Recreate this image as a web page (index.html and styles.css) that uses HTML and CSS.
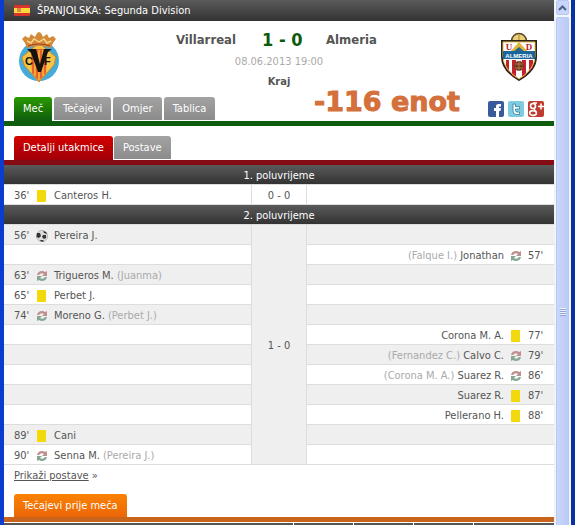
FILE: index.html
```html
<!DOCTYPE html>
<html lang="hr">
<head>
    <meta charset="UTF-8">
    <meta name="viewport" content="width=device-width, initial-scale=1.0">
    <title>Villarreal - Almeria</title>
    <link rel="stylesheet" href="styles.css">
</head>
<body>
    <!-- shared icons -->
    <svg class="sprite" aria-hidden="true">
        <symbol id="card" viewBox="0 0 12 12">
            <rect x="1" y="0" width="9" height="12" rx="1" fill="#f2d90c"/>
        </symbol>
        <symbol id="sub" viewBox="0 0 12 12">
            <path d="M1 5 Q2 1 6 1 Q8 1 9 2 L11 1 V6 H6 L8 4 Q5 2 3 5 Z" fill="#bf8f8f"/>
            <path d="M11 7 Q10 11 6 11 Q4 11 3 10 L1 11 V6 H6 L4 8 Q7 10 9 7 Z" fill="#86a892"/>
        </symbol>
        <symbol id="ball" viewBox="0 0 12 12">
            <circle cx="6" cy="6" r="5.6" fill="#ddd" stroke="#999" stroke-width=".6"/>
            <path d="M1 3 L4 3 L5 6 L3 8 L.5 7 Z M7 1 L10 2 L11 4 L8 3 Z M7 5 L10 5 L10 8 L8 9 L6 7 Z M4 10 L7 10 L8 11.5 L5 11.5 Z" fill="#333"/>
        </symbol>
    </svg>

    <main class="page">
        <header class="league">
            <svg class="flag" viewBox="0 0 16 11">
                <rect width="16" height="11" rx="1" fill="#d8342b"/>
                <rect y="3" width="16" height="5" fill="#ffd83a"/>
                <rect x="3" y="3" width="4" height="4" fill="#d98a4a"/>
            </svg>
            <span>ŠPANJOLSKA: Segunda Division</span>
        </header>

        <section class="match">
            <svg class="crest" viewBox="0 0 42 50" role="img" aria-label="Villarreal">
                <circle cx="21" cy="29" r="20" fill="#45acd9"/>
                <path d="M21 11 L38 25 L36 33 L21 50 L6 33 L4 25 Z" fill="#f6c444" stroke="#c58a32"/>
                <path d="M13 17 H29 L28 41 L21 49 L14 41 Z" fill="#e8602c"/>
                <path d="M17 18 V44 M21 18 V48 M25 18 V44" stroke="#f5b83c" stroke-width="1.6"/>
                <path d="M9 17 H18 L22 32 L26 17 H34 L30 20 L23 40 H20 L13 21 Z" fill="#17120e"/>
                <text x="7" y="33" class="crest-letter">C</text>
                <text x="26" y="33" class="crest-letter">F</text>
                <path d="M9 16 L7 11 L4 7 L7 4 L11 6 L13 2 L17 5 L19 1 L21 0 L23 1 L25 5 L29 2 L31 6 L35 4 L38 7 L35 11 L33 16 Q21 12 9 16 Z" fill="#d38b3a"/>
                <path d="M9 9 L13 11 L16 7 L21 10 L26 7 L29 11 L33 9" fill="none" stroke="#f8d68a" stroke-width="1.4"/>
                <path d="M10 14 Q21 10 32 14" fill="none" stroke="#a83e25" stroke-width="1.2"/>
            </svg>

            <div class="summary">
                <div class="teams">
                    <h2 class="home">Villarreal</h2>
                    <strong class="score">1 - 0</strong>
                    <h2>Almeria</h2>
                </div>
                <div class="date">08.06.2013 19:00</div>
                <div class="status">Kraj</div>
            </div>

            <svg class="crest" viewBox="0 0 42 50" role="img" aria-label="Almeria">
                <circle cx="21" cy="9" r="7.5" fill="#e8cf78" stroke="#5b4524" stroke-width="1.5"/>
                <path d="M21 3 V14 M15 9 H27" stroke="#a98a3c"/>
                <path d="M4 9 H38 V25 Q38 38 21 48 Q4 38 4 25 Z" fill="#fff" stroke="#2c2418" stroke-width="2"/>
                <path d="M8 28 V36 L11 40 V28 Z M14 28 V43 L18 46 V28 Z M24 28 V46 L28 43 V28 Z M31 28 V40 L35 35 V28 Z" fill="#c4202c"/>
                <path d="M5 10 H37 V24 Q37 37 21 47 Q5 37 5 24 Z" fill="none" stroke="#e5bd4d"/>
                <path d="M12 20 L21 10 L30 20 Z" fill="#e3b43d"/>
                <path d="M15 20 L21 15 L27 20 Z" fill="#26678e"/>
                <rect x="5" y="19" width="32" height="8" fill="#17669a"/>
                <text x="21" y="26" class="crest-name">ALMERIA</text>
                <text x="11" y="18" class="crest-initial">U</text>
                <text x="31" y="18" class="crest-initial">D</text>
                <circle cx="21" cy="34" r="5" fill="#6e3b22"/>
                <path d="M17 32 H25 M17 36 H25 M21 29 V39" stroke="#c98b4a" stroke-width=".7"/>
            </svg>

            <div class="note">-116 enot</div>
        </section>

        <div class="tabbar green">
            <nav class="tabs">
                <a href="#" class="active">Meč</a>
                <a href="#">Tečajevi</a>
                <a href="#">Omjer</a>
                <a href="#">Tablica</a>
            </nav>
            <div class="share">
                <a href="#" aria-label="Facebook">
                    <svg viewBox="0 0 16 16">
                        <rect width="16" height="16" rx="2" fill="#3a5b9b"/>
                        <path d="M8 16 V10 H6 V7 H8 V5 Q8 3 11 3 H13 V5.5 H11.5 Q11 5.5 11 6.5 V7 H13 L12.5 10 H11 V16 Z" fill="#fff"/>
                    </svg>
                </a>
                <a href="#" aria-label="Twitter">
                    <svg viewBox="0 0 16 16">
                        <rect width="16" height="16" rx="2" fill="#7fcbe0"/>
                        <path d="M5 3 H7.5 V5.5 H11.5 V8 H7.5 V9.5 Q7.5 11 9 11 H11.5 V13.5 H8.5 Q5 13.5 5 10 Z" fill="#fff" stroke="#2f7d9c" stroke-width=".8"/>
                    </svg>
                </a>
                <a href="#" aria-label="Google+">
                    <svg viewBox="0 0 16 16">
                        <rect width="16" height="16" rx="2" fill="#bf3b30"/>
                        <circle cx="5" cy="5" r="2.5" fill="none" stroke="#fff" stroke-width="1.6"/>
                        <path d="M5 2 H9 M7 7.5 Q5.5 8.5 7.5 10" fill="none" stroke="#fff" stroke-width="1.4"/>
                        <ellipse cx="5" cy="12" rx="3.4" ry="2.4" fill="none" stroke="#fff" stroke-width="1.6"/>
                        <path d="M10 5.5 H16 M13 2.5 V8.5" stroke="#fff" stroke-width="1.6"/>
                    </svg>
                </a>
            </div>
        </div>

        <div class="tabbar red">
            <nav class="tabs">
                <a href="#" class="active">Detalji utakmice</a>
                <a href="#">Postave</a>
            </nav>
        </div>

        <table class="events">
            <colgroup>
                <col class="side">
                <col class="result">
                <col class="side">
            </colgroup>
            <tbody>
                <tr><th colspan="3">1. poluvrijeme</th></tr>
                <tr>
                    <td><div class="event"><span class="time">36'</span><svg><use href="#card"/></svg><span>Canteros H.</span></div></td>
                    <td class="period">0 - 0</td>
                    <td></td>
                </tr>
            </tbody>
            <tbody class="striped">
                <tr><th colspan="3">2. poluvrijeme</th></tr>
                <tr>
                    <td><div class="event"><span class="time">56'</span><svg><use href="#ball"/></svg><span>Pereira J.</span></div></td>
                    <td class="period" rowspan="12">1 - 0</td>
                    <td></td>
                </tr>
                <tr>
                    <td></td>
                    <td><div class="event away"><span class="time">57'</span><svg><use href="#sub"/></svg><span><i>(Falque I.)</i> Jonathan</span></div></td>
                </tr>
                <tr>
                    <td><div class="event"><span class="time">63'</span><svg><use href="#sub"/></svg><span>Trigueros M. <i>(Juanma)</i></span></div></td>
                    <td></td>
                </tr>
                <tr>
                    <td><div class="event"><span class="time">65'</span><svg><use href="#card"/></svg><span>Perbet J.</span></div></td>
                    <td></td>
                </tr>
                <tr>
                    <td><div class="event"><span class="time">74'</span><svg><use href="#sub"/></svg><span>Moreno G. <i>(Perbet J.)</i></span></div></td>
                    <td></td>
                </tr>
                <tr>
                    <td></td>
                    <td><div class="event away"><span class="time">77'</span><svg><use href="#card"/></svg><span>Corona M. A.</span></div></td>
                </tr>
                <tr>
                    <td></td>
                    <td><div class="event away"><span class="time">79'</span><svg><use href="#sub"/></svg><span><i>(Fernandez C.)</i> Calvo C.</span></div></td>
                </tr>
                <tr>
                    <td></td>
                    <td><div class="event away"><span class="time">86'</span><svg><use href="#sub"/></svg><span><i>(Corona M. A.)</i> Suarez R.</span></div></td>
                </tr>
                <tr>
                    <td></td>
                    <td><div class="event away"><span class="time">87'</span><svg><use href="#card"/></svg><span>Suarez R.</span></div></td>
                </tr>
                <tr>
                    <td></td>
                    <td><div class="event away"><span class="time">88'</span><svg><use href="#card"/></svg><span>Pellerano H.</span></div></td>
                </tr>
                <tr>
                    <td><div class="event"><span class="time">89'</span><svg><use href="#card"/></svg><span>Cani</span></div></td>
                    <td></td>
                </tr>
                <tr>
                    <td><div class="event"><span class="time">90'</span><svg><use href="#sub"/></svg><span>Senna M. <i>(Pereira J.)</i></span></div></td>
                    <td></td>
                </tr>
            </tbody>
        </table>

        <div class="lineups"><a href="#">Prikaži postave</a> »</div>

        <div class="tabbar orange">
            <nav class="tabs">
                <a href="#" class="active">Tečajevi prije meča</a>
            </nav>
        </div>
        <div class="odds-head">
            <span></span><span></span><span></span><span></span><span></span>
        </div>
    </main>

    <div class="scrollbar">
        <button type="button" aria-label="Scroll up">
            <svg viewBox="0 0 9 6"><path d="M1 5 L4.5 1.5 L8 5" fill="none" stroke="#4d6185" stroke-width="2"/></svg>
        </button>
        <div class="thumb"><div class="grip"></div></div>
    </div>
</body>
</html>
```

FILE: styles.css
```css
* {
    box-sizing: border-box;
}
body {
    display: flex;
    height: 100vh;
    margin: 0;
    overflow: hidden;
    border-left: 4px solid #0a3ccf;
    border-right: 4px solid #0831a5;
    background-color: #fff;
    color: #555;
    font-family: "DejaVu Sans Condensed", "DejaVu Sans", sans-serif;
    font-size: 11px;
    line-height: 16px;
}
a {
    color: inherit;
}
.sprite {
    display: none;
}
.page {
    flex: 1;
    min-width: 0;
    overflow: hidden;
}

/* league header */
.league {
    display: flex;
    align-items: center;
    gap: 7px;
    height: 21px;
    padding-left: 10px;
    background: linear-gradient(#5a5a5a, #333);
    color: #fff;
}
.flag {
    width: 16px;
    height: 11px;
}

/* match summary */
.match {
    position: relative;
    display: flex;
    justify-content: space-between;
    height: 76px;
    padding: 11px 14px 0;
}
.crest {
    width: 42px;
    height: 50px;
}
.crest-letter {
    font: bold 11px "Liberation Sans", sans-serif;
    fill: #17120e;
}
.crest-name {
    font: bold 6px "Liberation Sans", sans-serif;
    fill: #fff;
    text-anchor: middle;
}
.crest-initial {
    font: bold 9px "Liberation Serif", serif;
    fill: #b9202b;
    text-anchor: middle;
}
.summary {
    flex: 1;
    text-align: center;
}
.teams {
    display: grid;
    grid-template-columns: 1fr 38px 1fr;
    gap: 26px;
    height: 16px;
    padding-left: 4px;
    align-items: center;
    text-align: left;
}
.teams h2 {
    margin: 0;
    font-size: 13px;
}
.teams .home {
    text-align: right;
}
.score {
    color: #0b5b0b;
    font-size: 18px;
    text-align: center;
    white-space: nowrap;
}
.date {
    margin-top: 6px;
    color: #aaa;
}
.status {
    margin-top: 4px;
    font-weight: bold;
}
.note {
    position: absolute;
    right: 94px;
    bottom: -22px;
    color: #d4703c;
    font: bold 27px/34px "DejaVu Sans", sans-serif;
    -webkit-text-stroke: 1px #d4703c;
}

/* tabs */
.tabbar {
    display: flex;
    justify-content: space-between;
    padding: 0 10px;
    border-bottom: 5px solid;
}
.tabs {
    display: flex;
    gap: 1px;
}
.tabs a {
    height: 23px;
    padding: 0 9px;
    border-radius: 3px 3px 0 0;
    background: linear-gradient(#a3a3a3, #8b8b8b);
    color: #fff;
    line-height: 24px;
    text-decoration: none;
}
.green {
    height: 29px;
    border-color: #0e5c0e;
}
.green .tabs {
    gap: 2px;
}
.green .active {
    height: 24px;
    background: linear-gradient(#2a9a00, #0e5c0e);
}
.red {
    height: 29px;
    margin-top: 10px;
    border-color: #860c14;
}
.red .active {
    height: 24px;
    background: linear-gradient(#d40000, #a00008);
}
.orange {
    height: 28px;
    margin-top: 8px;
    border-color: #c8641c;
}
.orange .active {
    background: linear-gradient(#fa8200, #ec6608);
}
.share {
    display: flex;
    gap: 4px;
    padding-top: 4px;
}
.share svg {
    display: block;
    width: 16px;
    height: 16px;
}

/* events */
.events {
    width: 100%;
    table-layout: fixed;
    border-spacing: 0;
}
.events .result {
    width: 56px;
}
.events th,
.events td {
    height: 20px;
    padding: 2px 0 0;
    border-bottom: 1px solid #ddd;
}
.events th {
    background: linear-gradient(#5a5a5a, #333);
    color: #fff;
    font-weight: normal;
}
.striped tr:nth-child(even) td,
.events .striped .period {
    background-color: #efefef;
}
.events .period {
    border-left: 1px solid #ddd;
    border-right: 1px solid #ddd;
    text-align: center;
}
.event {
    display: flex;
    align-items: center;
    gap: 6px;
    padding: 0 10px;
}
.event.away {
    flex-direction: row-reverse;
}
.event svg {
    width: 12px;
    height: 12px;
}
.event i {
    color: #aaa;
    font-style: normal;
}
.time {
    width: 16px;
}
.lineups {
    padding: 3px 10px 2px;
}

/* odds table header */
.odds-head {
    display: grid;
    grid-template-columns: 1fr 59px 59px 59px 80px;
    gap: 1px;
    padding-top: 1px;
}
.odds-head span {
    height: 20px;
    background-color: #555;
}

/* window scrollbar */
.scrollbar {
    display: flex;
    flex-direction: column;
    gap: 2px;
    width: 17px;
    padding: 0 2px 0 1px;
    border-left: 1px solid #edf0fa;
    background-color: #f4f6fd;
}
.scrollbar button {
    height: 15px;
    padding: 0;
    border: 1px solid #b8c8f0;
    border-radius: 2px;
    background-color: #c8d6fb;
    line-height: 0;
}
.scrollbar button svg {
    width: 9px;
    height: 6px;
}
.thumb {
    display: flex;
    flex: 1;
    justify-content: center;
    padding-top: 290px;
    border: 1px solid #b8c8f0;
    border-bottom: 0;
    border-radius: 2px 2px 0 0;
    background: linear-gradient(to right, #c9d7fd, #bccbf5);
}
.grip {
    width: 6px;
    height: 8px;
    background: repeating-linear-gradient(#eef4fe 0 1px, #8ca4dc 1px 2px);
}
```
